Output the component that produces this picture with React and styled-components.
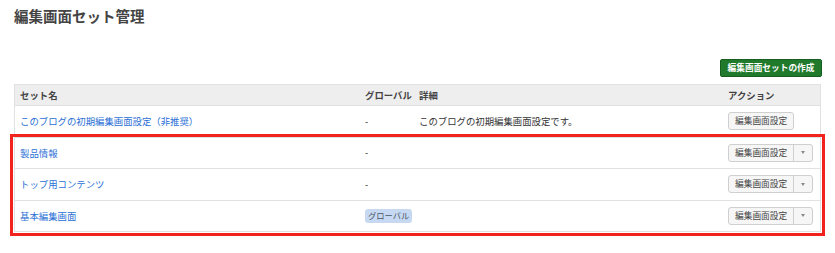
import styled, { createGlobalStyle } from 'styled-components';

const GlobalStyle = createGlobalStyle`
  html, body {
    margin: 0;
    padding: 0;
    background: #fff;
  }
  body {
    font-family: 'Liberation Sans', 'Noto Sans CJK JP', sans-serif;
    color: #333;
  }
`;

const Page = styled.div`
  width: 835px;
  padding: 8px 14px 20px 14px;
  box-sizing: border-box;
`;

const Title = styled.h1`
  margin: 0;
  font-size: 14.5px;
  line-height: 18px;
  font-weight: bold;
  color: #444;
`;

const Toolbar = styled.div`
  display: flex;
  justify-content: flex-end;
  width: 807px;
  margin-top: 33px;
  margin-bottom: 7px;
`;

const CreateButton = styled.button`
  font-family: inherit;
  height: 18px;
  width: 102px;
  padding: 0;
  border: 1px solid #175f21;
  border-radius: 2px;
  background: #217a2c;
  color: #fff;
  font-size: 8.7px;
  font-weight: bold;
  line-height: 16px;
  margin-right: -1px;
`;

const Table = styled.div`
  width: 807px;
  border: 1px solid #e1e1e1;
  box-sizing: border-box;
`;

const Row = styled.div`
  display: grid;
  grid-template-columns: 345px 54px 309px 1fr;
  align-items: center;
  box-sizing: border-box;
  height: ${p => (p.$head ? '20px' : '31.5px')};
  background: ${p => (p.$head ? '#eeeeee' : '#fff')};
  border-top: ${p => (p.$head ? 'none' : '1px solid #e1e1e1')};
  font-size: 9.4px;
  font-weight: ${p => (p.$head ? 'bold' : 'normal')};
  color: ${p => (p.$head ? '#444' : '#333')};
`;

const Cell = styled.div`
  padding-left: 5px;
  white-space: nowrap;
`;

const Link = styled.a`
  color: #2a6fd6;
  text-decoration: none;
`;

const Highlight = styled.div`
  position: relative;
  &::after {
    content: '';
    position: absolute;
    top: -3px;
    left: -5px;
    right: -5px;
    bottom: -5px;
    border: 3px solid #f2221c;
    pointer-events: none;
  }
`;

const Badge = styled.span`
  display: inline-block;
  padding: 0 3px;
  height: 14px;
  line-height: 14px;
  border-radius: 3px;
  background: #c7d9f2;
  color: #4a5566;
  font-size: 8.3px;
`;

const ButtonGroup = styled.div`
  display: inline-flex;
  height: 18px;
  border: 1px solid #cfcfcf;
  border-radius: 3px;
  background: #f6f6f6;
  box-sizing: border-box;
  overflow: hidden;
`;

const ActionButton = styled.button`
  font-family: inherit;
  font-size: 8.7px;
  color: #444;
  background: transparent;
  border: none;
  padding: 0 6px;
  height: 16px;
  line-height: 16px;
`;

const Caret = styled.button`
  width: 19px;
  height: 16px;
  border: none;
  border-left: 1px solid #cfcfcf;
  background: transparent;
  padding: 0;
  display: flex;
  align-items: center;
  justify-content: center;
  &::after {
    content: '';
    border-left: 2.5px solid transparent;
    border-right: 2.5px solid transparent;
    border-top: 3px solid #888;
  }
`;

const rows = [
  { name: '製品情報', global: false },
  { name: 'トップ用コンテンツ', global: false },
  { name: '基本編集画面', global: true },
];

const Actions = ({ split }) => (
  <ButtonGroup>
    <ActionButton>編集画面設定</ActionButton>
    {split && <Caret />}
  </ButtonGroup>
);

const App = () => (
  <Page>
    <GlobalStyle />
    <Title>編集画面セット管理</Title>
    <Toolbar>
      <CreateButton>編集画面セットの作成</CreateButton>
    </Toolbar>
    <Table>
      <Row $head>
        <Cell>セット名</Cell>
        <Cell>グローバル</Cell>
        <Cell>詳細</Cell>
        <Cell>アクション</Cell>
      </Row>
      <Row>
        <Cell><Link href="#">このブログの初期編集画面設定（非推奨）</Link></Cell>
        <Cell>-</Cell>
        <Cell>このブログの初期編集画面設定です。</Cell>
        <Cell><Actions /></Cell>
      </Row>
      <Highlight>
        {rows.map(r => (
          <Row key={r.name}>
            <Cell><Link href="#">{r.name}</Link></Cell>
            <Cell>{r.global ? <Badge>グローバル</Badge> : '-'}</Cell>
            <Cell />
            <Cell><Actions split /></Cell>
          </Row>
        ))}
      </Highlight>
    </Table>
  </Page>
);

export default App;
